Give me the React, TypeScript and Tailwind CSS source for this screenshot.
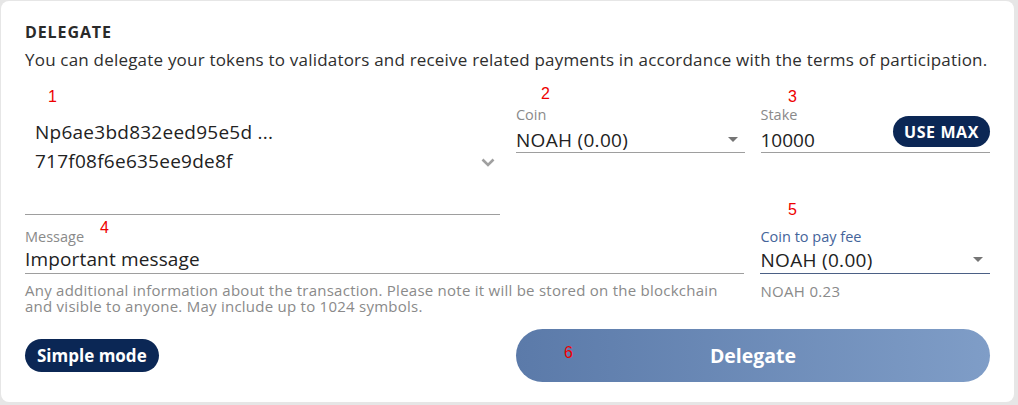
import React from "react";

const font = { fontFamily: '"Open Sans", "Noto Sans", sans-serif' };

function Caret() {
  return (
    <svg width="10" height="5" viewBox="0 0 10 5" className="shrink-0">
      <path d="M0 0 L10 0 L5 5 Z" fill="#757575" />
    </svg>
  );
}

export default function App() {
  return (
    <div className="w-[1018px] h-[405px] bg-[#e6e6e6] pl-px pt-px" style={font}>
      <div className="relative w-[1013px] h-[401px] bg-white rounded-[8px] px-[24px] pt-[21px] text-[#222]">
        <div className="text-[16px] font-bold leading-[20px] tracking-[0.9px] text-[#2a2a2a]">DELEGATE</div>
        <div className="mt-[7px] text-[17px] leading-[22px] tracking-[0.2px] text-[#2e2e2e] whitespace-nowrap">
          You can delegate your tokens to validators and receive related payments in accordance with the terms of participation.
        </div>

        <div className="mt-[34px] flex">
          <div className="w-[476px] h-[110px] border-b border-[#9e9e9e] flex items-start">
            <div className="pl-[10px] pt-[13px] flex-1 text-[19px] leading-[29px] tracking-[0.25px] text-[#222]">
              <div>Np6ae3bd832eed95e5d ...</div>
              <div>717f08f6e635ee9de8f</div>
            </div>
            <svg width="14" height="9" viewBox="0 0 14 9" className="mt-[53px] mr-[5px]">
              <path d="M1.5 1.5 L7 7 L12.5 1.5" stroke="#a0a0a0" strokeWidth="2.6" fill="none" />
            </svg>
          </div>

          <div className="ml-[16px] w-[229px]">
            <div className="text-[14.5px] leading-[18px] text-[#8a8a8a] mt-[1px]">Coin</div>
            <div className="mt-[3px] flex items-center justify-between border-b border-[#9e9e9e] h-[26px] pr-[7px]">
              <span className="text-[19px] leading-[24px] tracking-[0.3px]">NOAH (0.00)</span>
              <Caret />
            </div>
          </div>

          <div className="ml-[16px] w-[230px]">
            <div className="text-[14.5px] leading-[18px] text-[#8a8a8a] mt-[1px]">Stake</div>
            <div className="mt-[3px] flex items-center justify-between border-b border-[#9e9e9e] h-[26px]">
              <span className="text-[19px] leading-[24px]">10000</span>
              <span className="-mt-[16px] h-[31px] px-[11px] rounded-full bg-[#0b2755] text-white text-[16px] font-bold flex items-center tracking-[0.6px]">
                USE MAX
              </span>
            </div>
          </div>
        </div>

        <div className="mt-[13px] flex">
          <div className="w-[721px]">
            <div className="text-[14.5px] leading-[18px] text-[#8a8a8a]">Message</div>
            <div className="border-b border-[#9e9e9e] h-[28px] text-[19px] leading-[26px] tracking-[0.15px]">Important message</div>
            <div className="mt-[8px] text-[15px] leading-[16px] tracking-[0.25px] text-[#8a8a8a] whitespace-nowrap">
              <div>Any additional information about the transaction. Please note it will be stored on the blockchain</div>
              <div>and visible to anyone. May include up to 1024 symbols.</div>
            </div>
          </div>
          <div className="ml-[16px] w-[230px]">
            <div className="text-[14.5px] leading-[18px] text-[#44649a]">Coin to pay fee</div>
            <div className="flex items-center justify-between border-b border-[#4b6085] h-[28px] pr-[7px]">
              <span className="text-[19px] leading-[26px] tracking-[0.3px]">NOAH (0.00)</span>
              <Caret />
            </div>
            <div className="mt-[9px] text-[15px] leading-[16px] tracking-[0.3px] text-[#8a8a8a]">NOAH 0.23</div>
          </div>
        </div>

        <div className="mt-[15px] flex items-center">
          <div className="w-[476px]">
            <span className="inline-flex h-[33px] items-center rounded-full bg-[#0b2755] px-[12px] text-white text-[17px] font-bold">
              Simple mode
            </span>
          </div>
          <div className="ml-[16px] w-[475px] h-[53px] rounded-full bg-gradient-to-r from-[#5b7aa9] to-[#7f9dc7] flex items-center justify-center text-white text-[19.5px] font-bold">
            Delegate
          </div>
        </div>

        <span className="absolute left-[47px] top-[88px] text-[16px] leading-[16px] text-[#e00] font-['Liberation_Sans']">1</span>
        <span className="absolute left-[540px] top-[85px] text-[16px] leading-[16px] text-[#e00] font-['Liberation_Sans']">2</span>
        <span className="absolute left-[787px] top-[88px] text-[16px] leading-[16px] text-[#e00] font-['Liberation_Sans']">3</span>
        <span className="absolute left-[99px] top-[219px] text-[16px] leading-[16px] text-[#e00] font-['Liberation_Sans']">4</span>
        <span className="absolute left-[787px] top-[201px] text-[16px] leading-[16px] text-[#e00] font-['Liberation_Sans']">5</span>
        <span className="absolute left-[563px] top-[344px] text-[16px] leading-[16px] text-[#e00] font-['Liberation_Sans']">6</span>
      </div>
    </div>
  );
}
